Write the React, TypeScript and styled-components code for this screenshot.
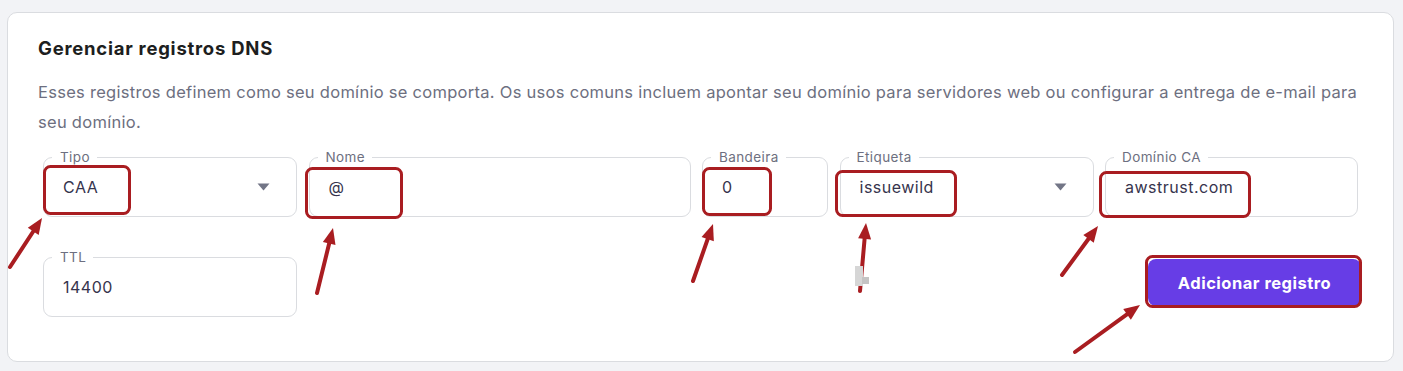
import React from "react";
import styled, { createGlobalStyle } from "styled-components";

const GlobalStyle = createGlobalStyle`
  html, body { margin: 0; padding: 0; background: #f2f3f6; }
  body { font-family: "Inter", "Noto Sans", sans-serif; -webkit-font-smoothing: antialiased; }
  * { box-sizing: border-box; }
`;

const Page = styled.div`
  position: relative;
  width: 1403px;
  height: 371px;
  padding: 12px 9px 9px 7px;
  overflow: hidden;
`;

const Card = styled.section`
  background: #fff;
  border: 1px solid #dadce0;
  border-radius: 10px;
  height: 350px;
  padding: 23px 26px 0 30px;
`;

const Title = styled.h2`
  margin: 0;
  font-size: 18.5px;
  letter-spacing: 0.75px;
  line-height: 24px;
  font-weight: 700;
  color: #1d1e20;
`;

const Description = styled.p`
  margin: 17px 0 0;
  font-size: 16.5px;
  letter-spacing: 0.28px;
  line-height: 30px;
  color: #6d6f80;
`;

const Form = styled.div`
  display: grid;
  grid-template-columns: 254px 382px 126px 254px 253px;
  column-gap: 11.5px;
  row-gap: 40px;
  margin: 20px 0 0 5px;
`;

const Field = styled.div`
  position: relative;
  height: 60px;
  border: 1px solid #dadce0;
  border-radius: 9px;
  display: flex;
  align-items: center;
  justify-content: space-between;
  padding: 0 26px 0 19px;
`;

const Label = styled.span`
  position: absolute;
  top: -9px;
  left: 8px;
  padding: 0 7px 0 8px;
  background: #fff;
  font-size: 13.5px;
  letter-spacing: 0.4px;
  line-height: 16px;
  color: #6d6f80;
`;

const Value = styled.span`
  font-size: 16px;
  letter-spacing: 0.5px;
  color: #36344d;
`;

const Caret = styled.svg`
  width: 13px;
  height: 8px;
  flex: none;
`;

const ButtonCell = styled.div`
  grid-column: 4 / 6;
  display: flex;
  justify-content: flex-end;
  margin-right: -3px;
  padding-top: 2px;
`;

const PrimaryButton = styled.button`
  height: 47px;
  width: 213px;
  border: none;
  border-radius: 8px;
  background: #673de6;
  color: #fff;
  font-family: inherit;
  font-size: 16.5px;
  letter-spacing: 0.5px;
  font-weight: 700;
  cursor: pointer;
`;

const Overlay = styled.svg`
  position: absolute;
  left: 0;
  top: 0;
  width: 1403px;
  height: 371px;
  pointer-events: none;
`;

type FieldDef = { label: string; value: string; select?: boolean };

const fields: FieldDef[] = [
  { label: "Tipo", value: "CAA", select: true },
  { label: "Nome", value: "@" },
  { label: "Bandeira", value: "0" },
  { label: "Etiqueta", value: "issuewild", select: true },
  { label: "Domínio CA", value: "awstrust.com" },
];

const FormField = ({ label, value, select }: FieldDef) => (
  <Field>
    <Label>{label}</Label>
    <Value>{value}</Value>
    {select && (
      <Caret viewBox="0 0 13 8">
        <path d="M0.5 0.5 H12.5 L6.5 7.5 Z" fill="#727586" />
      </Caret>
    )}
  </Field>
);

const RED = "#a91d21";

const boxes = [
  [43, 165, 131, 215],
  [305, 167, 403, 219],
  [702, 167, 772, 216],
  [835, 170, 957, 217],
  [1099, 171, 1251, 218],
  [1145, 255, 1362, 308],
];

const arrows = [
  [10, 267, 42, 218],
  [317, 293, 333, 228],
  [693, 281, 713, 224],
  [860, 291, 866, 223],
  [1062, 275, 1098, 226],
  [1075, 352, 1140, 305],
];

const Arrow = ({ a }: { a: number[] }) => {
  const [x1, y1, x2, y2] = a;
  const dx = x2 - x1;
  const dy = y2 - y1;
  const len = Math.hypot(dx, dy);
  const ux = dx / len;
  const uy = dy / len;
  const hl = 16;
  const hw = 6.5;
  const bx = x2 - ux * hl;
  const by = y2 - uy * hl;
  const p1 = `${bx - uy * hw},${by + ux * hw}`;
  const p2 = `${bx + uy * hw},${by - ux * hw}`;
  return (
    <g>
      <line x1={x1} y1={y1} x2={bx + ux * 2} y2={by + uy * 2} stroke={RED} strokeWidth={4} strokeLinecap="round" />
      <polygon points={`${x2},${y2} ${p1} ${p2}`} fill={RED} />
    </g>
  );
};

export default function App() {
  return (
    <>
      <GlobalStyle />
      <Page>
        <Card>
          <Title>Gerenciar registros DNS</Title>
          <Description>
            Esses registros definem como seu domínio se comporta. Os usos comuns incluem apontar seu domínio para servidores web ou configurar a entrega de e-mail para seu domínio.
          </Description>
          <Form>
            {fields.map((f) => (
              <FormField key={f.label} {...f} />
            ))}
            <FormField label="TTL" value="14400" />
            <ButtonCell>
              <PrimaryButton>Adicionar registro</PrimaryButton>
            </ButtonCell>
          </Form>
        </Card>
        <Overlay viewBox="0 0 1403 371">
          {boxes.map(([x1, y1, x2, y2], i) => (
            <rect
              key={i}
              x={x1 + 1.5}
              y={y1 + 1.5}
              width={x2 - x1 - 3}
              height={y2 - y1 - 3}
              rx={6}
              fill="none"
              stroke={RED}
              strokeWidth={3}
            />
          ))}
          {arrows.map((a, i) => (
            <Arrow key={i} a={a} />
          ))}
          <rect x={855} y={266} width={8} height={20} fill="#d6d6d6" />
          <rect x={862} y={277} width={7} height={7} fill="#c4c4c4" />
        </Overlay>
      </Page>
    </>
  );
}
